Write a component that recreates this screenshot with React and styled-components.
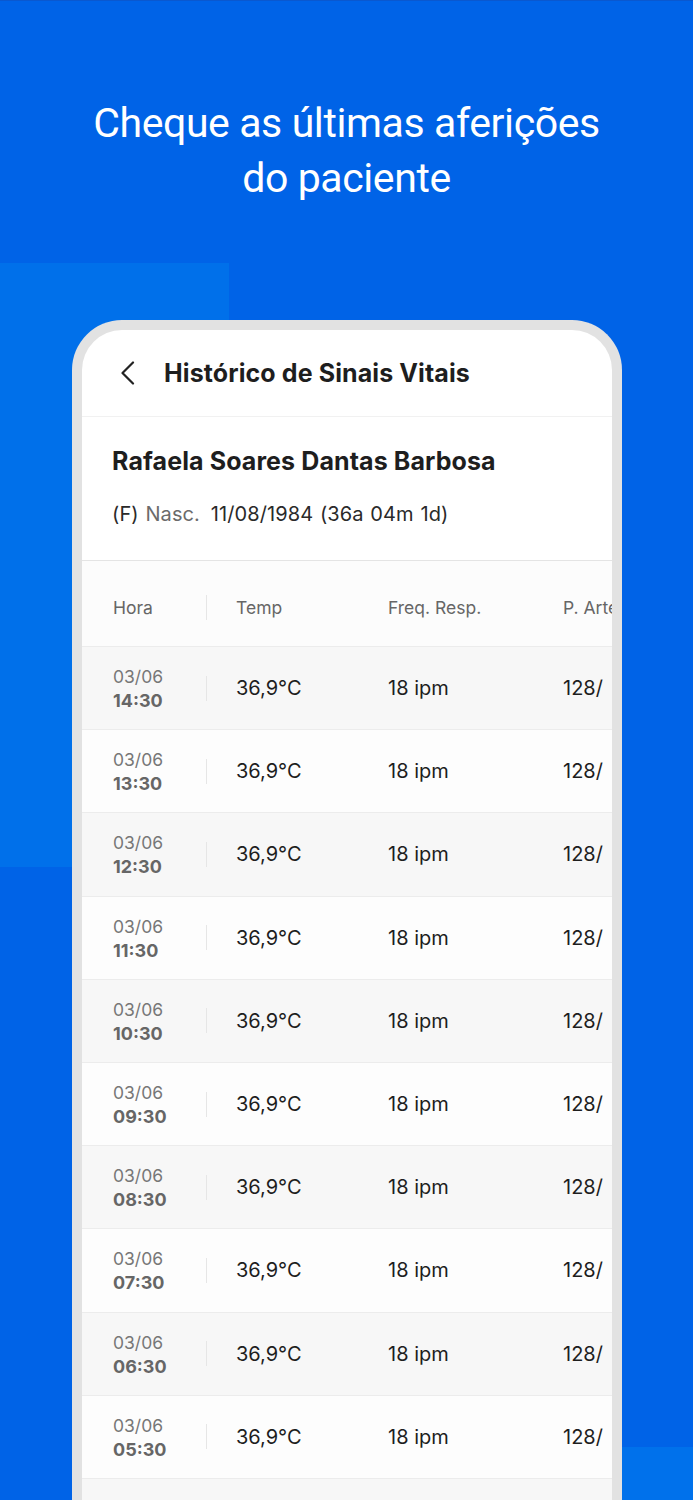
import React from "react";
import styled, { createGlobalStyle } from "styled-components";

const rows = [
  "14:30", "13:30", "12:30", "11:30", "10:30",
  "09:30", "08:30", "07:30", "06:30", "05:30",
  "04:30", "03:30",
];

const App = () => {
  return (
    <Page>
      <GlobalStyle />
      <Headline>
        Cheque as últimas aferições
        <br />
        do paciente
      </Headline>

      <PhoneFrame>
        <Screen>
          <TopBar>
            <BackButton aria-label="Voltar">
              <svg width="16" height="24" viewBox="0 0 16 24" fill="none">
                <path
                  d="M13 1.5 L2.5 12 L13 22.5"
                  stroke="#222"
                  strokeWidth="2.2"
                  strokeLinecap="round"
                  strokeLinejoin="round"
                />
              </svg>
            </BackButton>
            <ScreenTitle>Histórico de Sinais Vitais</ScreenTitle>
          </TopBar>

          <Patient>
            <PatientName>Rafaela Soares Dantas Barbosa</PatientName>
            <PatientInfo>
              (F) <Muted>Nasc.</Muted> 11/08/1984 (36a 04m 1d)
            </PatientInfo>
          </Patient>

          <Table>
            <HeadRow>
              <HeadCell>Hora</HeadCell>
              <Divider />
              <HeadCell $pad>Temp</HeadCell>
              <HeadCell $pad>Freq. Resp.</HeadCell>
              <HeadCell $pad>P. Arterial</HeadCell>
            </HeadRow>

            {rows.map((time, i) => (
              <Row key={time} $shaded={i % 2 === 0}>
                <TimeCell>
                  <DateText>03/06</DateText>
                  <TimeText>{time}</TimeText>
                </TimeCell>
                <Divider />
                <Value $pad>36,9°C</Value>
                <Value $pad>18 ipm</Value>
                <Value $pad>128/</Value>
              </Row>
            ))}
          </Table>
        </Screen>
      </PhoneFrame>
    </Page>
  );
};

export default App;

const GlobalStyle = createGlobalStyle`
  html, body {
    margin: 0;
    padding: 0;
  }
  body {
    font-family: Inter, "Noto Sans", sans-serif;
    -webkit-font-smoothing: antialiased;
  }
`;

const Page = styled.div`
  width: 693px;
  height: 1500px;
  overflow: hidden;
  box-sizing: border-box;
  padding-top: 95px;
  border-top: 1px solid #0a58cf;
  background:
    linear-gradient(#0070ea, #0070ea) 0 262px / 229px 604px no-repeat,
    linear-gradient(#0071eb, #0071eb) 600px 1446px / 93px 60px no-repeat,
    #0063e7;
`;

const Headline = styled.h1`
  margin: 0;
  text-align: center;
  color: #ffffff;
  font-family: Roboto, "Noto Sans", sans-serif;
  font-weight: 400;
  font-size: 41px;
  line-height: 55px;
  letter-spacing: -0.4px;
`;

const PhoneFrame = styled.div`
  margin: 114px 0 0 72px;
  width: 550px;
  height: 1200px;
  box-sizing: border-box;
  border: 10px solid #e2e2e2;
  border-bottom: none;
  border-radius: 50px 50px 0 0;
  background: #e2e2e2;
`;

const Screen = styled.div`
  height: 100%;
  background: #ffffff;
  border-radius: 40px 40px 0 0;
  overflow: hidden;
`;

const TopBar = styled.div`
  height: 86px;
  display: flex;
  align-items: center;
  gap: 28px;
  padding-left: 38px;
  border-bottom: 1px solid #f1f1f1;
`;

const BackButton = styled.button`
  display: flex;
  padding: 0;
  border: none;
  background: none;
`;

const ScreenTitle = styled.h2`
  margin: 0;
  font-size: 25px;
  font-weight: 700;
  color: #1e1e1e;
  letter-spacing: 0.1px;
`;

const Patient = styled.div`
  padding: 29px 30px 34px;
  display: flex;
  flex-direction: column;
  gap: 26px;
  border-bottom: 1px solid #e4e4e4;
`;

const PatientName = styled.div`
  font-size: 25px;
  line-height: 30px;
  font-weight: 700;
  color: #1e1e1e;
  letter-spacing: 0.1px;
`;

const PatientInfo = styled.div`
  font-size: 20px;
  line-height: 24px;
  color: #2a2a2a;
  letter-spacing: 0.1px;
  word-spacing: 1px;
`;

const Muted = styled.span`
  color: #6b6b6b;
  margin-right: 4px;
`;

const Table = styled.div`
  display: flex;
  flex-direction: column;
`;

const gridCols = `
  display: grid;
  grid-template-columns: 124px 1px 152px 175px 1fr;
  align-items: center;
  box-sizing: border-box;
`;

const HeadRow = styled.div`
  ${gridCols}
  height: 86px;
  padding-top: 8px;
  background: #fcfcfc;
  border-bottom: 1px solid #ececec;
`;

const HeadCell = styled.div`
  padding-left: ${(p) => (p.$pad ? "29px" : "31px")};
  font-size: 17.5px;
  color: #666;
  white-space: nowrap;
  overflow: hidden;
`;

const Row = styled.div`
  ${gridCols}
  height: 83.2px;
  background: ${(p) => (p.$shaded ? "#f7f7f7" : "#fdfdfd")};
  border-bottom: 1px solid #ececec;
`;

const Divider = styled.div`
  width: 1px;
  height: 25px;
  background: #e6e6e6;
`;

const TimeCell = styled.div`
  padding-left: 31px;
  padding-top: 2px;
  display: flex;
  flex-direction: column;
  line-height: 24px;
  font-size: 17.5px;
`;

const DateText = styled.span`
  color: #777;
`;

const TimeText = styled.span`
  color: #666;
  font-weight: 700;
  font-size: 18px;
`;

const Value = styled.div`
  padding-left: 29px;
  font-size: 20px;
  color: #1e1e1e;
  white-space: nowrap;
  overflow: hidden;
`;
